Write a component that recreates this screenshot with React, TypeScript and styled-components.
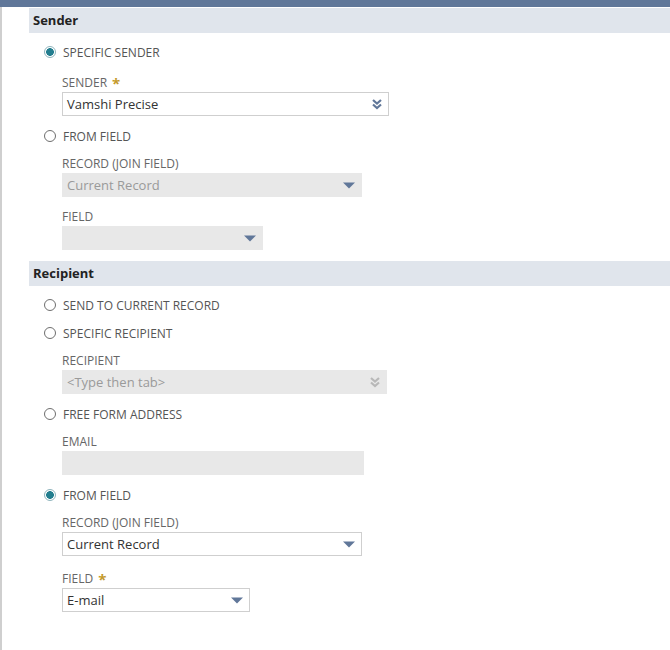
import React from 'react';
import styled, { createGlobalStyle } from 'styled-components';

const GlobalStyle = createGlobalStyle`
  body {
    margin: 0;
    background: #fff;
    font-family: "Open Sans", "Liberation Sans", sans-serif;
  }
`;

type ArrowKind = 'triangle' | 'double';

interface FieldProps {
  label: string;
  value?: string;
  width: number;
  required?: boolean;
  disabled?: boolean;
  arrow?: ArrowKind;
}

const Triangle: React.FC = () => (
  <svg width="12" height="7" viewBox="0 0 12 7">
    <path d="M0 0.5 L12 0.5 L6 6.5 Z" fill="#607799" />
  </svg>
);

const DoubleChevron: React.FC<{ color: string }> = ({ color }) => (
  <svg width="10" height="11" viewBox="0 0 10 11">
    <path d="M1 1 L5 4.5 L9 1" stroke={color} strokeWidth="2.2" fill="none" />
    <path d="M1 5.5 L5 9 L9 5.5" stroke={color} strokeWidth="2.2" fill="none" />
  </svg>
);

const Field: React.FC<FieldProps> = ({
  label,
  value,
  width,
  required,
  disabled,
  arrow,
}) => (
  <FieldGroup>
    <FieldLabel $required={required}>
      {label}
      {required && <Star>*</Star>}
    </FieldLabel>
    <InputBox $width={width} $disabled={disabled}>
      <InputText $disabled={disabled}>{value}</InputText>
      {arrow === 'triangle' && <Triangle />}
      {arrow === 'double' && (
        <DoubleChevron color={disabled ? '#b8b8b8' : '#607799'} />
      )}
    </InputBox>
  </FieldGroup>
);

const Radio: React.FC<{ label: string; checked?: boolean }> = ({
  label,
  checked,
}) => (
  <RadioRow>
    <RadioCircle $checked={checked} />
    <RadioLabel>{label}</RadioLabel>
  </RadioRow>
);

const App: React.FC = () => {
  return (
    <>
      <GlobalStyle />
      <Page>
        <TopBar />
        <Section>
          <SectionHeader>Sender</SectionHeader>
          <SectionBody>
            <Radio label="SPECIFIC SENDER" checked />
            <Field
              label="SENDER"
              value="Vamshi Precise"
              width={327}
              required
              arrow="double"
            />
            <Radio label="FROM FIELD" />
            <Field
              label="RECORD (JOIN FIELD)"
              value="Current Record"
              width={300}
              disabled
              arrow="triangle"
            />
            <Field label="FIELD" width={201} disabled arrow="triangle" />
          </SectionBody>
        </Section>
        <Section>
          <SectionHeader>Recipient</SectionHeader>
          <SectionBody>
            <Radio label="SEND TO CURRENT RECORD" />
            <Radio label="SPECIFIC RECIPIENT" />
            <Field
              label="RECIPIENT"
              value="<Type then tab>"
              width={325}
              disabled
              arrow="double"
            />
            <Radio label="FREE FORM ADDRESS" />
            <Field label="EMAIL" width={302} disabled />
            <Radio label="FROM FIELD" checked />
            <Field
              label="RECORD (JOIN FIELD)"
              value="Current Record"
              width={300}
              arrow="triangle"
            />
            <Field
              label="FIELD"
              value="E-mail"
              width={188}
              required
              arrow="triangle"
            />
          </SectionBody>
        </Section>
      </Page>
    </>
  );
};

export default App;

const Page = styled.div`
  min-height: 650px;
  box-sizing: border-box;
  border-left: 2px solid #cfcfcf;
`;

const TopBar = styled.div`
  height: 7px;
  margin-left: -2px;
  margin-bottom: 1px;
  background: #607799;
`;

const Section = styled.div`
  padding-left: 27px;
`;

const SectionHeader = styled.div`
  height: 25px;
  line-height: 25px;
  padding-left: 4px;
  background: #e0e5ec;
  font-size: 13px;
  font-weight: 700;
  color: #222;
`;

const SectionBody = styled.div`
  padding: 5px 0 5px 15px;
`;

const RadioRow = styled.div`
  display: flex;
  align-items: center;
  height: 28px;
  gap: 7px;
`;

const RadioCircle = styled.span<{ $checked?: boolean }>`
  width: 12px;
  height: 12px;
  box-sizing: border-box;
  border-radius: 50%;
  border: 1px solid ${(p) => (p.$checked ? '#8fb4bc' : '#6e6e6e')};
  background: ${(p) =>
    p.$checked
      ? 'radial-gradient(circle, #237e8f 0 3.6px, #fff 4.1px)'
      : '#fff'};
`;

const RadioLabel = styled.span`
  font-size: 12px;
  color: #555;
`;

const FieldGroup = styled.div`
  padding-left: 18px;
  margin-bottom: 6px;
`;

const FieldLabel = styled.div<{ $required?: boolean }>`
  display: flex;
  align-items: flex-end;
  gap: 5px;
  padding-top: ${(p) => (p.$required ? '8px' : '5px')};
  height: 18px;
  line-height: 18px;
  font-size: 12px;
  color: #666;
`;

const Star = styled.span`
  color: #c49a2c;
  font-size: 15px;
  font-weight: 700;
  line-height: 18px;
`;

const InputBox = styled.div<{ $width: number; $disabled?: boolean }>`
  display: flex;
  align-items: center;
  justify-content: space-between;
  box-sizing: border-box;
  width: ${(p) => p.$width}px;
  height: 24px;
  padding: 0 6px 0 4px;
  border: 1px solid ${(p) => (p.$disabled ? '#e8e8e8' : '#cfcfcf')};
  background: ${(p) => (p.$disabled ? '#e8e8e8' : '#fff')};
`;

const InputText = styled.span<{ $disabled?: boolean }>`
  font-size: 13px;
  color: ${(p) => (p.$disabled ? '#9a9a9a' : '#333')};
  white-space: nowrap;
`;
